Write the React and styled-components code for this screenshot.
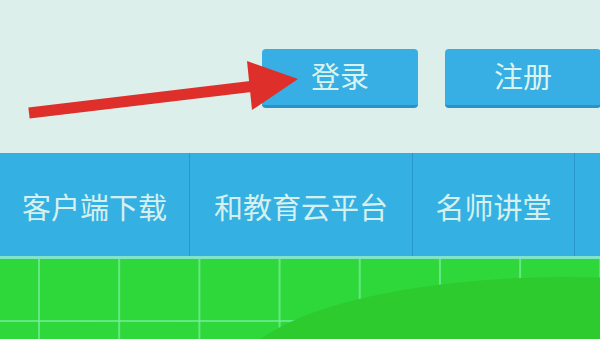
import React from "react";
import styled, { createGlobalStyle } from "styled-components";

const Global = createGlobalStyle`
  html, body { margin: 0; padding: 0; background: #ddefeb; }
  body { font-family: "Noto Sans CJK SC", "Noto Sans", sans-serif; overflow: hidden; }
`;

const Page = styled.div`
  position: relative;
  width: 600px;
  height: 339px;
  overflow: hidden;
  background: #ddefeb;
  display: flex;
  flex-direction: column;
`;

const Header = styled.div`
  height: 153px;
  box-sizing: border-box;
  padding: 49px 0 0 262px;
  display: flex;
  gap: 27px;
  flex-shrink: 0;
`;

const AuthButton = styled.button`
  flex-shrink: 0;
  width: 156px;
  height: 59px;
  box-sizing: border-box;
  border: none;
  border-bottom: 3px solid #2b92c9;
  border-radius: 4px;
  background: #37afe4;
  color: #d9f3ef;
  font-family: "Noto Sans CJK SC", sans-serif;
  font-size: 29px;
  line-height: 1;
  padding: 0 0 3px;
  display: flex;
  align-items: center;
  justify-content: center;
`;

const Nav = styled.nav`
  height: 103px;
  flex-shrink: 0;
  display: flex;
  background: #35b0e3;
  border-bottom: 3px solid #7fe5c6;
`;

const NavItem = styled.div`
  width: ${(p) => p.$w}px;
  flex-shrink: 0;
  box-sizing: border-box;
  border-right: 1px solid #2997cd;
  display: flex;
  align-items: center;
  justify-content: center;
  color: #d5f0ee;
  font-size: 29px;
  white-space: nowrap;
  padding-top: 2px;
`;

const Field = styled.div`
  position: relative;
  flex: 1;
  background-color: #2ed73a;
  background-image:
    linear-gradient(to right, rgba(120, 240, 160, 0.7) 2px, transparent 2px),
    linear-gradient(to bottom, rgba(120, 240, 160, 0.7) 2px, transparent 2px);
  background-size: 80.2px 80px;
  background-position: 38px 61px;
`;

const Hill = styled.svg`
  position: absolute;
  left: 0;
  top: 0;
  width: 600px;
  height: 80px;
`;

const Arrow = styled.svg`
  position: absolute;
  left: 0;
  top: 0;
  width: 600px;
  height: 150px;
  pointer-events: none;
`;

const navItems = [
  { label: "客户端下载", w: 190 },
  { label: "和教育云平台", w: 223 },
  { label: "名师讲堂", w: 162 },
  { label: "", w: 40 },
];

export default function App() {
  return (
    <>
      <Global />
      <Page>
        <Header>
          <AuthButton>登录</AuthButton>
          <AuthButton>注册</AuthButton>
        </Header>
        <Nav>
          {navItems.map((it, i) => (
            <NavItem key={i} $w={it.w}>
              {it.label}
            </NavItem>
          ))}
        </Nav>
        <Field>
          <Hill viewBox="0 0 600 80">
            <ellipse cx="565" cy="119" rx="330" ry="101" fill="#2dcb2e" />
          </Hill>
        </Field>
        <Arrow viewBox="0 0 600 150">
          <line
            x1="29"
            y1="113"
            x2="255"
            y2="86"
            stroke="#df2f2b"
            strokeWidth="11"
            strokeLinecap="butt"
          />
          <polygon points="247,61 252,110 298,79" fill="#df2f2b" />
        </Arrow>
      </Page>
    </>
  );
}
